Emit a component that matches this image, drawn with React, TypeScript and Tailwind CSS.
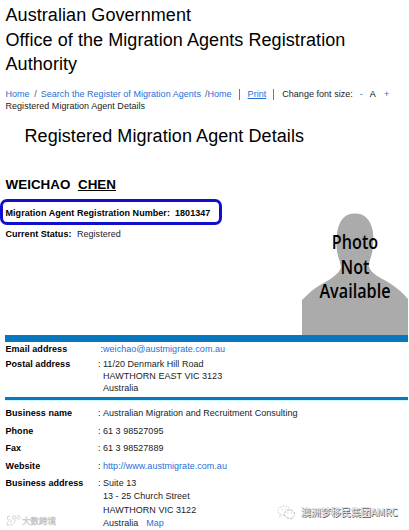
import type { ReactNode } from "react";

interface DetailRowProps {
  label: string;
  className: string;
  children: ReactNode;
}

function DetailRow({ label, className, children }: DetailRowProps) {
  return (
    <div className={`flex ${className}`}>
      <div className="w-[92.5px] shrink-0 font-bold text-black tracking-[0.05px]">{label}</div>
      <div className="w-[5px] shrink-0">:</div>
      <div>{children}</div>
    </div>
  );
}

function PhotoPlaceholder() {
  return (
    <div className="relative w-[106px] h-[122px]">
      <svg viewBox="0 0 106 122" className="block w-full h-full" fill="#ababab">
        <path d="M53 0.5C64 0.5 69 8 71 19C72 30 71 37 69 44C67 50 66 53 68 56C72 63 82 66 89 71C95 75 101 80 106 86V122H0V87C6 81 11 76 18 72C26 68 34 63 38 57C40 54 38 50 37 46C34 38 34 29 35 20C37 8 42 0.5 53 0.5Z" />
      </svg>
      <div className="absolute inset-x-0 top-[17px] text-center scale-x-[0.85] font-['Open_Sans',sans-serif] font-semibold text-[19px] leading-[24.700px] text-black">
        <div>Photo</div>
        <div>Not</div>
        <div>Available</div>
      </div>
    </div>
  );
}

function WeChatIcon() {
  return (
    <svg viewBox="0 0 19 15" className="w-[19px] h-[15px]" fill="none" stroke="#999" strokeWidth="0.7">
      <path strokeDasharray="1 1.6" d="M7 10C3.500 10 1 8 1 5.500S3.500 1 7 1S12.500 3 13 5M3 9.500L2.500 12L5 10.500" />
      <path strokeDasharray="2.500 1.200" d="M12.500 5C9.500 5 7.500 7 7.500 9.200S9.500 13 12.500 13L15 14V12.500C16.500 11.700 17.500 10.500 17.500 9.200C17.500 7 15.500 5 12.500 5Z" />
      <path d="M4.500 4H5.300M8.500 4H9.300M10.500 8H11.300M14 8H14.800" />
    </svg>
  );
}

export default function App() {
  return (
    <div className="relative w-[409px] h-[530px] overflow-hidden bg-white font-['Liberation_Sans',Arial,sans-serif] text-[9px] leading-[12px] tracking-[0.03px] text-[#222] whitespace-nowrap">
      <header className="pl-[5.500px] pt-[3px] text-[18px] leading-[24.500px] tracking-[0.07px] text-black">
        <div>Australian Government</div>
        <div>Office of the Migration Agents Registration</div>
        <div>Authority</div>
      </header>

      <nav className="pl-[5.500px] mt-[11.500px]">
        <div className="flex items-center h-[12px] text-[#1f6fd6]">
          <span>Home</span>
          <span className="ml-[4.500px] text-[#555]">/</span>
          <span className="ml-[4px]">Search the Register of Migration Agents</span>
          <span className="ml-[4px] text-[#555]">/</span>
          <span>Home</span>
          <span className="ml-[7px] w-px h-[11px] bg-[#777]" />
          <span className="ml-[8px] underline">Print</span>
          <span className="ml-[7px] w-px h-[11px] bg-[#777]" />
          <span className="ml-[8px] text-[#222]">Change font size:</span>
          <span className="ml-[7px]">-</span>
          <span className="ml-[7px] text-black">A</span>
          <span className="ml-[8px]">+</span>
        </div>
        <div>Registered Migration Agent Details</div>
      </nav>

      <h1 className="pl-[24.500px] mt-[12px] text-[18px] leading-[25px] tracking-[0.07px] text-black">
        Registered Migration Agent Details
      </h1>

      <section className="flex h-[186px]">
        <div className="w-[302px] shrink-0">
          <h2 className="flex gap-[7.500px] pl-[5.500px] mt-[28px] text-[13.400px] leading-[16px] font-bold text-black">
            <span>WEICHAO</span>
            <span className="underline">CHEN</span>
          </h2>
          <div className="mt-[6px] flex items-center w-[222px] h-[26px] pl-[2.500px] pt-[2px] border-[3px] border-[#1010cc] rounded-[7px] font-bold text-black tracking-[0.05px]">
            <span>Migration Agent Registration Number:</span>
            <span className="ml-[5px]">1801347</span>
          </div>
          <div className="pl-[5.500px] mt-[3px]">
            <span className="font-bold text-black">Current Status:</span>
            <span className="ml-[5.500px]">Registered</span>
          </div>
        </div>
        <div className="pt-[64px]">
          <PhotoPlaceholder />
        </div>
      </section>

      <section className="ml-[5px] w-[403px] border-t-[7px] border-b-[3px] border-[#0878be] h-[65px] pl-[0.500px]">
        <div className="flex">
          <div className="w-[95px] shrink-0 font-bold text-black tracking-[0.05px] mt-px">Email address</div>
          <div className="mt-px">
            :<span className="text-[#1f6fd6]">weichao@austmigrate.com.au</span>
          </div>
        </div>
        <DetailRow label="Postal address" className="mt-[3px]">
          <div>11/20 Denmark Hill Road</div>
          <div>HAWTHORN EAST VIC 3123</div>
          <div>Australia</div>
        </DetailRow>
      </section>

      <section className="ml-[5px] w-[403px] border-t border-[#c9f7fc] pl-[0.500px] pt-[6px]">
        <DetailRow label="Business name" className="h-[17.500px]">
          Australian Migration and Recruitment Consulting
        </DetailRow>
        <DetailRow label="Phone" className="h-[17.500px]">61 3 98527095</DetailRow>
        <DetailRow label="Fax" className="h-[17.500px]">61 3 98527889</DetailRow>
        <DetailRow label="Website" className="h-[17px]">
          <span className="text-[#1f6fd6]">http://www.austmigrate.com.au</span>
        </DetailRow>
        <DetailRow label="Business address" className="">
          <div className="h-[13.500px]">Suite 13</div>
          <div className="h-[13.500px]">13 - 25 Church Street</div>
          <div className="h-[13.500px]">HAWTHORN VIC 3122</div>
          <div>
            Australia<span className="ml-[8px] text-[#1f6fd6]">Map</span>
          </div>
        </DetailRow>
      </section>

      <div className="absolute left-[6px] top-[514px] flex items-center gap-px text-[#ccc]">
        <svg viewBox="0 0 15 11" className="w-[15px] h-[11px]" fill="none" stroke="currentColor" strokeWidth="0.8">
          <path d="M4 1.500H1.500V4L3 5.500L1 8V10H6L9 7V5M3.500 4L5.500 6L4 8" />
          <circle cx="8" cy="2.500" r="1.700" />
          <circle cx="12.500" cy="2.500" r="1.700" />
        </svg>
        <span className="font-['Noto_Sans_CJK_SC',sans-serif] text-[8.500px] text-white [-webkit-text-stroke:0.5px_#c4c4c4]">大数跨境</span>
      </div>

      <div className="absolute left-[277px] top-[504px] flex items-center gap-[5px] h-[16px]">
        <WeChatIcon />
        <span className="font-['Noto_Sans_CJK_SC',sans-serif] text-[10px] tracking-[0px] text-[#eee] [text-shadow:0.7px_0.7px_0_#555,-0.3px_-0.3px_0_#999]">
          澳洲梦移民集团AMRC
        </span>
      </div>
    </div>
  );
}
